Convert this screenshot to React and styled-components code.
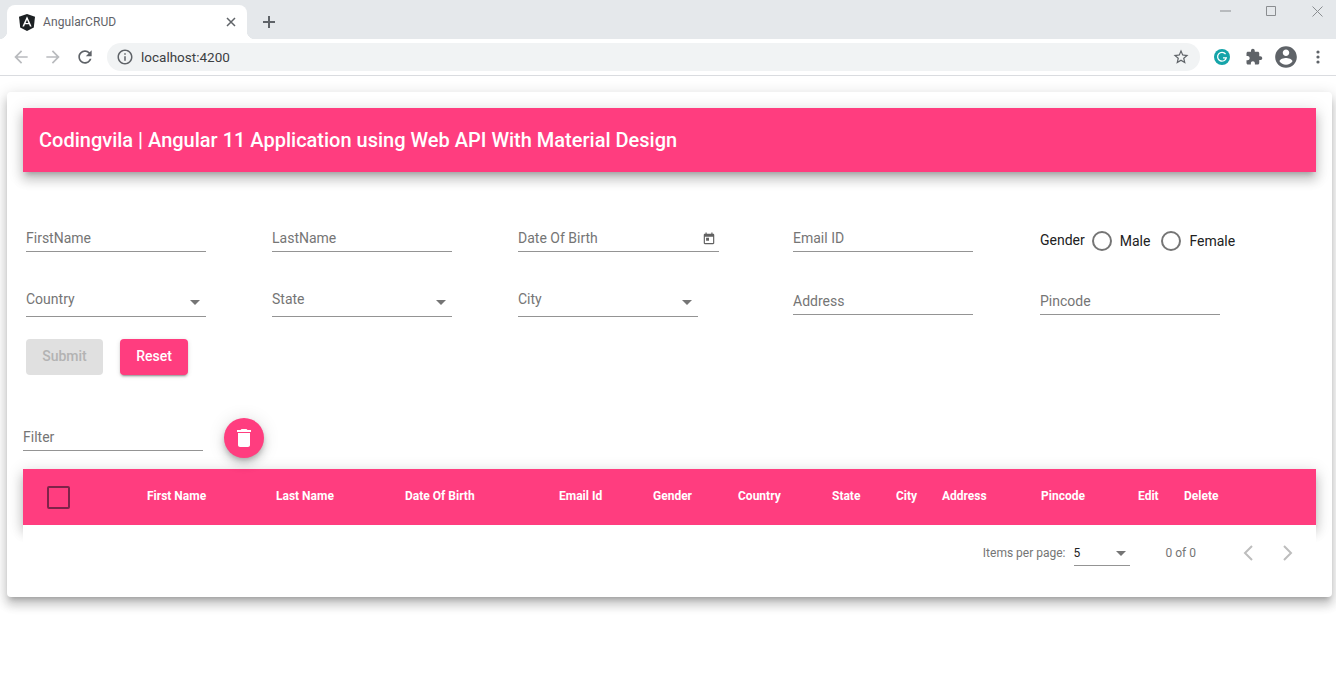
import React from "react";
import styled, { createGlobalStyle } from "styled-components";

const Global = createGlobalStyle`
  html, body { margin: 0; padding: 0; background: #fff; height: 100%; overflow: hidden; }
  * { box-sizing: border-box; }
  body { font-family: Roboto, "Liberation Sans", sans-serif; }
`;

const PINK = "#ff3d7f";
const ELEVATION = "0 5px 5px -3px rgba(0,0,0,.2), 0 8px 10px 1px rgba(0,0,0,.14), 0 3px 14px 2px rgba(0,0,0,.12)";

const Page = styled.div`width: 1336px; height: 690px; overflow: hidden; background: #fff;`;
const TabStrip = styled.div`height: 39px; background: #e5e8eb; display: flex; align-items: flex-end; padding-left: 7px;`;
const Tab = styled.div`
  position: relative; width: 240px; height: 34px; background: #fff; border-radius: 8px 8px 0 0;
  display: flex; align-items: center; padding: 0 11px 0 12px; gap: 8px;
  &::before, &::after { content: ""; position: absolute; bottom: 0; width: 8px; height: 8px; }
  &::before { left: -8px; background: radial-gradient(circle at 0 0, transparent 8px, #fff 8.5px); }
  &::after { right: -8px; background: radial-gradient(circle at 100% 0, transparent 8px, #fff 8.5px); }
`;
const TabTitle = styled.span`flex: 1; font: 12px Roboto, sans-serif; color: #5f6368; letter-spacing: .1px;`;
const NewTab = styled.div`width: 28px; height: 28px; margin: 0 0 3px 8px; display: flex; align-items: center; justify-content: center;`;
const WindowControls = styled.div`margin: 0 -4px 0 auto; align-self: flex-start; display: flex;`;
const WinBtn = styled.div`width: 46px; height: 22px; display: flex; align-items: center; justify-content: center;`;
const Toolbar = styled.div`height: 37px; background: #fff; border-bottom: 1px solid #dadce0; display: flex; align-items: flex-start; padding: 4px 2px 0 5px;`;
const ToolBtn = styled.div`width: 32px; height: 28px; display: flex; align-items: center; justify-content: center; flex: none;`;
const Omnibox = styled.div`
  flex: 1; height: 28px; margin: 0 6px; background: #f1f3f4; border-radius: 14px;
  display: flex; align-items: center; padding: 0 10px 0 9px; gap: 7px;
`;
const Url = styled.span`flex: 1; font: 13.5px Roboto, sans-serif; color: #3c4043;`;

const Card = styled.main`
  margin: 16px 4px 0 7px; height: 505px; padding: 16px; background: #fff; border-radius: 4px; box-shadow: ${ELEVATION};
`;
const Header = styled.header`
  height: 64px; background: ${PINK}; box-shadow: ${ELEVATION}; display: flex; align-items: center; padding: 0 16px;
  color: #fff; font-size: 20px; font-weight: 500;
`;
const FormRow = styled.div`
  display: grid; grid-template-columns: 246px 246px 275px 247px 1fr; padding-left: 3px; align-items: start;
  margin-top: ${p => p.$top || 0}px;
`;
const Field = styled.div`
  width: ${p => p.$w || 180}px; height: ${p => p.$h}px; border-bottom: 1px solid #949494;
  display: flex; align-items: flex-end; padding-bottom: ${p => p.$pad || 5}px;
  font-size: 14px; line-height: 16px; color: #757575;
`;
const FieldLabel = styled.span`flex: 1;`;
const Caret = styled.span`
  flex: none; width: 0; height: 0; margin: 0 ${p => p.$right ?? 6}px ${p => p.$bottom ?? 2}px 0;
  border-left: 5.5px solid transparent; border-right: 5.5px solid transparent; border-top: 5.5px solid #757575;
`;
const CalendarSlot = styled.span`flex: none; display: flex; margin-right: 3px;`;
const GenderGroup = styled.div`display: flex; align-items: center; height: 44px; padding-top: 22px; font-size: 14px; color: #212121;`;
const GenderTitle = styled.span`margin-right: 7px; position: relative; top: -1px;`;
const Radio = styled.span`width: 20px; height: 20px; border: 2px solid #757575; border-radius: 50%; margin-right: 8px; flex: none;`;
const RadioLabel = styled.span`margin-right: 11px;`;
const Actions = styled.div`display: flex; gap: 17px; margin: 22px 0 0 3px;`;
const Button = styled.button`
  height: 36px; width: ${p => p.$w}px; border: 0; border-radius: 4px; padding: 0 0 2px; font: 500 14px Roboto, sans-serif;
  background: ${p => (p.disabled ? "#e0e0e0" : PINK)}; color: ${p => (p.disabled ? "#b3b3b3" : "#fff")};
  box-shadow: ${p => (p.disabled ? "none" : "0 3px 1px -2px rgba(0,0,0,.2), 0 2px 2px 0 rgba(0,0,0,.14), 0 1px 5px 0 rgba(0,0,0,.12)")};
`;
const FilterRow = styled.div`display: flex; align-items: flex-start; gap: 21px; margin-top: 43px;`;
const Fab = styled.div`
  width: 40px; height: 40px; border-radius: 50%; background: ${PINK}; display: flex; align-items: center; justify-content: center;
  box-shadow: 0 3px 5px -1px rgba(0,0,0,.2), 0 6px 10px 0 rgba(0,0,0,.14), 0 1px 18px 0 rgba(0,0,0,.12);
`;
const TableHead = styled.div`
  margin-top: 11px; height: 56px; background: ${PINK}; box-shadow: ${ELEVATION}; display: flex; align-items: center;
  color: #fff; font-size: 12px; font-weight: 700;
`;
const HeadCell = styled.div`width: ${p => p.$w}px; flex: none; white-space: nowrap; margin-bottom: 2px;`;
const SelectCell = styled.div`width: 124px; flex: none; padding-left: 24px; display: flex; align-items: center;`;
const Check = styled.span`width: 23px; height: 23px; border: 2px solid #7f2349; border-radius: 2px;`;
const Paginator = styled.div`
  height: 56px; background: #fff; display: flex; align-items: center; justify-content: flex-end; padding-right: 8px;
  font-size: 12px; color: #757575;
`;
const PerPageLabel = styled.span`margin-right: 8px;`;
const PageSelect = styled.div`
  width: 56px; height: 24px; margin-top: 1px; border-bottom: 1px solid #949494; display: flex; align-items: center; color: #212121;
`;
const Range = styled.span`margin: 0 32px 0 36px;`;
const PageBtn = styled.div`width: 40px; height: 40px; display: flex; align-items: center; justify-content: center;`;

const Icon = ({ d, size = 24, box = 24, fill = "#5f6368" }) => (
  <svg width={size} height={size} viewBox={`0 0 ${box} ${box}`} fill={fill}><path d={d} /></svg>
);

const ARROW = "M20 11H7.83l5.59-5.59L12 4l-8 8 8 8 1.41-1.41L7.83 13H20z";
const RELOAD = "M17.65 6.35C16.2 4.9 14.21 4 12 4c-4.42 0-7.99 3.58-7.99 8s3.57 8 7.99 8c3.73 0 6.84-2.55 7.73-6h-2.08c-.82 2.33-3.04 4-5.65 4-3.31 0-6-2.69-6-6s2.69-6 6-6c1.66 0 3.14.69 4.22 1.78L13 11h7V4l-2.35 2.35z";
const INFO = "M11 7h2v2h-2zm0 4h2v6h-2zm1-9C6.48 2 2 6.48 2 12s4.48 10 10 10 10-4.48 10-10S17.52 2 12 2zm0 18c-4.41 0-8-3.59-8-8s3.59-8 8-8 8 3.59 8 8-3.59 8-8 8z";
const STAR = "M22 9.24l-7.19-.62L12 2 9.19 8.63 2 9.24l5.46 4.73L5.82 21 12 17.27 18.18 21l-1.63-7.03L22 9.24zM12 15.4l-3.76 2.27 1-4.28-3.32-2.88 4.38-.38L12 6.1l1.71 4.04 4.38.38-3.32 2.88 1 4.28L12 15.4z";
const PUZZLE = "M20.5 11H19V7c0-1.1-.9-2-2-2h-4V3.5C13 2.12 11.88 1 10.5 1S8 2.12 8 3.5V5H4c-1.1 0-1.99.9-1.99 2v3.8H3.5c1.49 0 2.7 1.21 2.7 2.7s-1.21 2.7-2.7 2.7H2V20c0 1.1.9 2 2 2h3.8v-1.5c0-1.49 1.21-2.7 2.7-2.7 1.49 0 2.7 1.21 2.7 2.7V22H17c1.1 0 2-.9 2-2v-4h1.5c1.38 0 2.5-1.12 2.5-2.5S21.88 11 20.5 11z";
const ACCOUNT = "M12 2C6.48 2 2 6.48 2 12s4.48 10 10 10 10-4.48 10-10S17.52 2 12 2zm0 3c1.66 0 3 1.34 3 3s-1.34 3-3 3-3-1.34-3-3 1.34-3 3-3zm0 14.2c-2.5 0-4.71-1.28-6-3.22.03-1.99 4-3.08 6-3.08 1.99 0 5.97 1.09 6 3.08-1.29 1.94-3.5 3.22-6 3.22z";
const TODAY = "M19 3h-1V1h-2v2H8V1H6v2H5c-1.11 0-1.99.9-1.99 2L3 19c0 1.1.89 2 2 2h14c1.1 0 2-.9 2-2V5c0-1.1-.9-2-2-2zm0 16H5V8h14v11zM7 10h5v5H7z";
const TRASH = "M6 19c0 1.1.9 2 2 2h8c1.1 0 2-.9 2-2V7H6v12zM19 4h-3.5l-1-1h-5l-1 1H5v2h14V4z";

const AngularLogo = () => (
  <svg width="16" height="17" viewBox="0 0 16 17">
    <path d="M8 0L0 2.8l1.2 10.6L8 17l6.8-3.6L16 2.8z" fill="#1c2023" />
    <path d="M8 2.2L3.4 12.6h1.7l.9-2.3h4l.9 2.3h1.7L8 2.2zm1.35 6.7h-2.7L8 5.7z" fill="#fff" />
  </svg>
);

const Stroke = ({ w, h, d, color = "#5f6368", sw = 1.6, cap = "butt" }) => (
  <svg width={w} height={h} viewBox={`0 0 ${w} ${h}`} fill="none" stroke={color} strokeWidth={sw} strokeLinecap={cap}><path d={d} /></svg>
);

const Grammarly = () => (
  <svg width="16" height="16" viewBox="0 0 16 16">
    <circle cx="8" cy="8" r="8" fill="#15a4a9" />
    <path d="M11.6 5.2A4.4 4.4 0 1 0 12.3 8.8H9" fill="none" stroke="#fff" strokeWidth="1.3" />
  </svg>
);

const Dots = () => (
  <svg width="4" height="14" viewBox="0 0 4 14" fill="#5f6368">
    <circle cx="2" cy="2" r="1.6" /><circle cx="2" cy="7" r="1.6" /><circle cx="2" cy="12" r="1.6" />
  </svg>
);

const COLUMNS = [
  ["First Name", 129], ["Last Name", 129], ["Date Of Birth", 154], ["Email Id", 94], ["Gender", 85],
  ["Country", 94], ["State", 64], ["City", 46], ["Address", 99], ["Pincode", 97], ["Edit", 46], ["Delete", 60],
];

export default function App() {
  return (
    <Page>
      <Global />
      <TabStrip>
        <Tab>
          <AngularLogo />
          <TabTitle>AngularCRUD</TabTitle>
          <Stroke w={10} h={10} d="M1 1l8 8M9 1L1 9" sw={1.5} />
        </Tab>
        <NewTab><Stroke w={14} h={14} d="M7 1v12M1 7h12" sw={2} /></NewTab>
        <WindowControls>
          <WinBtn><Stroke w={11} h={2} d="M0 1h11" color="#8a8d90" sw={1} /></WinBtn>
          <WinBtn><Stroke w={10} h={10} d="M.5.5h9v9h-9z" color="#8a8d90" sw={1} /></WinBtn>
          <WinBtn><Stroke w={11} h={11} d="M.5.5l10 10M10.5.5l-10 10" color="#8a8d90" sw={1} /></WinBtn>
        </WindowControls>
      </TabStrip>
      <Toolbar>
        <ToolBtn><Icon d={ARROW} size={20} fill="#b9bbbe" /></ToolBtn>
        <ToolBtn><svg width="20" height="20" viewBox="0 0 24 24" fill="#b9bbbe" transform="scale(-1 1)"><path d={ARROW} /></svg></ToolBtn>
        <ToolBtn><Icon d={RELOAD} size={20} /></ToolBtn>
        <Omnibox>
          <Icon d={INFO} size={18} />
          <Url>localhost:4200</Url>
          <Icon d={STAR} size={18} />
        </Omnibox>
        <ToolBtn><Grammarly /></ToolBtn>
        <ToolBtn><Icon d={PUZZLE} size={18} /></ToolBtn>
        <ToolBtn><Icon d={ACCOUNT} size={26} /></ToolBtn>
        <ToolBtn><Dots /></ToolBtn>
      </Toolbar>
      <Card>
        <Header>Codingvila | Angular 11 Application using Web API With Material Design</Header>
        <FormRow $top={36}>
          <Field $h={44}><FieldLabel>FirstName</FieldLabel></Field>
          <Field $h={44}><FieldLabel>LastName</FieldLabel></Field>
          <Field $h={44} $w={201}>
            <FieldLabel>Date Of Birth</FieldLabel>
            <CalendarSlot><Icon d={TODAY} size={14} fill="#616161" /></CalendarSlot>
          </Field>
          <Field $h={44}><FieldLabel>Email ID</FieldLabel></Field>
          <GenderGroup>
            <GenderTitle>Gender</GenderTitle>
            <Radio /><RadioLabel>Male</RadioLabel>
            <Radio /><RadioLabel>Female</RadioLabel>
          </GenderGroup>
        </FormRow>
        <FormRow>
          <Field $h={65} $pad={9}><FieldLabel>Country</FieldLabel><Caret /></Field>
          <Field $h={65} $pad={9}><FieldLabel>State</FieldLabel><Caret /></Field>
          <Field $h={65} $pad={9}><FieldLabel>City</FieldLabel><Caret /></Field>
          <Field $h={63}><FieldLabel>Address</FieldLabel></Field>
          <Field $h={63}><FieldLabel>Pincode</FieldLabel></Field>
        </FormRow>
        <Actions>
          <Button disabled $w={77}>Submit</Button>
          <Button $w={68}>Reset</Button>
        </Actions>
        <FilterRow>
          <Field $h={33}><FieldLabel>Filter</FieldLabel></Field>
          <Fab><Icon d={TRASH} size={24} fill="#fff" /></Fab>
        </FilterRow>
        <TableHead>
          <SelectCell><Check /></SelectCell>
          {COLUMNS.map(([label, w]) => <HeadCell key={label} $w={w}>{label}</HeadCell>)}
        </TableHead>
        <Paginator>
          <PerPageLabel>Items per page:</PerPageLabel>
          <PageSelect><FieldLabel>5</FieldLabel><Caret $right={4} $bottom={0} /></PageSelect>
          <Range>0 of 0</Range>
          <PageBtn><Stroke w={12} h={18} d="M10 2L3 9l7 7" color="#bdbdbd" sw={2} /></PageBtn>
          <PageBtn><Stroke w={12} h={18} d="M2 2l7 7-7 7" color="#bdbdbd" sw={2} /></PageBtn>
        </Paginator>
      </Card>
    </Page>
  );
}
